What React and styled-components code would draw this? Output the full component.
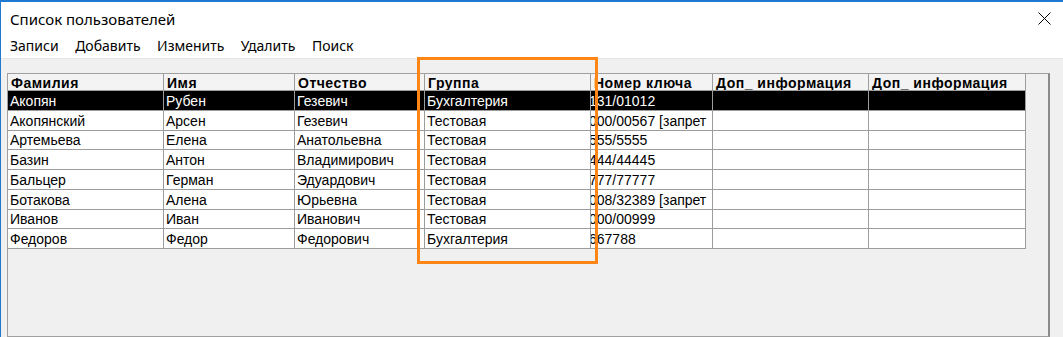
import React from "react";
import styled, { createGlobalStyle } from "styled-components";

const Global = createGlobalStyle`
  html, body { margin: 0; padding: 0; background: #f0f0f0; overflow: hidden; }
  * { box-sizing: border-box; }
`;

const Window = styled.div`
  position: relative;
  width: 1063px;
  height: 337px;
  border-top: 2px solid #1f79d0;
  border-left: 1px solid #1f79d0;
  background: #f0f0f0;
  display: flex;
  flex-direction: column;
  overflow: hidden;
`;

const TitleBar = styled.div`
  height: 34px;
  background: #fff;
  display: flex;
  align-items: center;
  justify-content: space-between;
  padding: 0 12px 1px 9px;
  font-family: "Noto Sans", sans-serif;
  font-size: 15px;
  color: #000;
`;

const CloseButton = styled.div`
  width: 14px;
  height: 14px;
  display: flex;
  align-items: center;
  justify-content: center;
`;

const MenuBar = styled.div`
  height: 23px;
  background: #fff;
  border-bottom: 1px solid #e6e6e6;
  display: flex;
  align-items: center;
  gap: 16.5px;
  padding: 0 0 3px 9px;
  font-family: "Noto Sans", sans-serif;
  font-size: 14px;
  color: #000;
`;

const MenuItem = styled.span``;

const Body = styled.div`
  flex: 1;
  padding: 14px 13px 0 6px;
  display: flex;
`;

const Frame = styled.div`
  flex: 1;
  border: 1px solid #a0a0a0;
  border-right: 2px solid #8a8a8a;
  background: #f0f0f0;
  font-family: "Liberation Sans", Arial, sans-serif;
`;

const Row = styled.div`
  display: grid;
  grid-template-columns: 156px 131px 130px 166px 122px 156px 157px;
  width: 1018px;
  height: ${(p) => (p.$header ? "17px" : "19.75px")};
  background: ${(p) => (p.$selected ? "#000" : p.$header ? "#f3f3f3" : "#fff")};
  color: ${(p) => (p.$selected ? "#fff" : "#000")};
`;

const Cell = styled.div`
  border-right: 1px solid #9c9c9c;
  border-bottom: 1px solid #9c9c9c;
  display: flex;
  align-items: center;
  overflow: hidden;
  white-space: nowrap;
  padding-top: 1px;
  padding-left: ${(p) => (p.$clipped ? "0" : "2px")};
  text-indent: ${(p) => (p.$clipped ? "-2px" : "0")};
  font-size: 14px;
  line-height: 1;
`;

const HeadCell = styled(Cell)`
  font-weight: bold;
  letter-spacing: 0.5px;
  padding-left: 3px;
  padding-top: 1px;
  text-indent: 0;
`;

const Highlight = styled.div`
  position: absolute;
  left: 416px;
  top: 55px;
  width: 181px;
  height: 207px;
  border: 3px solid #ff8616;
  pointer-events: none;
`;

const headers = [
  "Фамилия",
  "Имя",
  "Отчество",
  "Группа",
  "Номер ключа",
  "Доп_ информация",
  "Доп_ информация",
];

const rows = [
  ["Акопян", "Рубен", "Гезевич", "Бухгалтерия", "131/01012"],
  ["Акопянский", "Арсен", "Гезевич", "Тестовая", "000/00567 [запрет"],
  ["Артемьева", "Елена", "Анатольевна", "Тестовая", "555/5555"],
  ["Базин", "Антон", "Владимирович", "Тестовая", "444/44445"],
  ["Бальцер", "Герман", "Эдуардович", "Тестовая", "777/77777"],
  ["Ботакова", "Алена", "Юрьевна", "Тестовая", "008/32389 [запрет"],
  ["Иванов", "Иван", "Иванович", "Тестовая", "000/00999"],
  ["Федоров", "Федор", "Федорович", "Бухгалтерия", "667788"],
];

export default function App() {
  return (
    <>
      <Global />
      <Window>
        <TitleBar>
          <span>Список пользователей</span>
          <CloseButton>
            <svg width="13" height="13" viewBox="0 0 13 13">
              <path d="M0.5 0.5 L12.5 12.5 M12.5 0.5 L0.5 12.5" stroke="#000" strokeWidth="1" fill="none" />
            </svg>
          </CloseButton>
        </TitleBar>
        <MenuBar>
          <MenuItem>Записи</MenuItem>
          <MenuItem>Добавить</MenuItem>
          <MenuItem>Изменить</MenuItem>
          <MenuItem>Удалить</MenuItem>
          <MenuItem>Поиск</MenuItem>
        </MenuBar>
        <Body>
          <Frame>
            <Row $header>
              {headers.map((h, i) => (
                <HeadCell key={i}>{h}</HeadCell>
              ))}
            </Row>
            {rows.map((r, i) => (
              <Row key={i} $selected={i === 0}>
                <Cell>{r[0]}</Cell>
                <Cell>{r[1]}</Cell>
                <Cell>{r[2]}</Cell>
                <Cell>{r[3]}</Cell>
                <Cell $clipped>{r[4]}</Cell>
                <Cell />
                <Cell />
              </Row>
            ))}
          </Frame>
        </Body>
        <Highlight />
      </Window>
    </>
  );
}
